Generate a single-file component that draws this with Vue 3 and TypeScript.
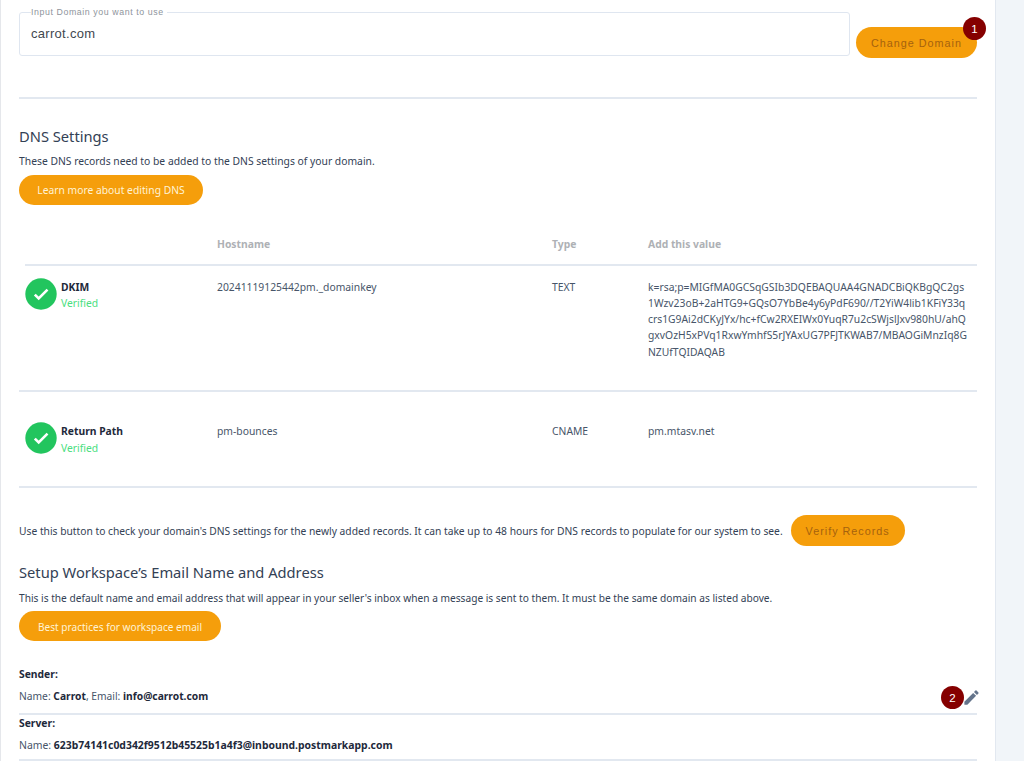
<script setup lang="ts">
interface DnsRow {
  name: string
  host: string
  type: string
  value: string[]
}

const rows: DnsRow[] = [
  {
    name: 'DKIM',
    host: '20241119125442pm._domainkey',
    type: 'TEXT',
    value: [
      'k=rsa;p=MIGfMA0GCSqGSIb3DQEBAQUAA4GNADCBiQKBgQC2gs',
      '1Wzv23oB+2aHTG9+GQsO7YbBe4y6yPdF690//T2YiW4lib1KFiY33q',
      'crs1G9Ai2dCKyJYx/hc+fCw2RXEIWx0YuqR7u2cSWjslJxv980hU/ahQ',
      'gxvOzH5xPVq1RxwYmhfS5rJYAxUG7PFJTKWAB7/MBAOGiMnzIq8G',
      'NZUfTQIDAQAB',
    ],
  },
  {
    name: 'Return Path',
    host: 'pm-bounces',
    type: 'CNAME',
    value: ['pm.mtasv.net'],
  },
]
</script>

<template>
  <div class="page">
    <main class="card">
      <section class="domain">
        <fieldset class="field">
          <legend>Input Domain you want to use</legend>
          <span class="field-value">carrot.com</span>
        </fieldset>
        <button class="btn btn-muted change">
          Change Domain
          <span class="badge badge-one">1</span>
        </button>
      </section>

      <hr class="rule first-rule" />

      <h2 class="dns-title">DNS Settings</h2>
      <p class="copy dns-copy">These DNS records need to be added to the DNS settings of your domain.</p>
      <button class="btn btn-light learn">Learn more about editing DNS</button>

      <div class="table">
        <div class="row head">
          <div></div>
          <div>Hostname</div>
          <div>Type</div>
          <div>Add this value</div>
        </div>
        <div v-for="row in rows" :key="row.name" class="row body" :class="row.type.toLowerCase()">
          <div class="status">
            <span class="check">
              <svg viewBox="0 0 32 32" width="32" height="32" aria-hidden="true">
                <circle cx="16" cy="16" r="15.7" fill="#22c55e" />
                <path d="M9.8 16.6l3.9 3.9 8.8-8.8" fill="none" stroke="#fff" stroke-width="2.6" />
              </svg>
            </span>
            <div class="status-text">
              <strong>{{ row.name }}</strong>
              <span>Verified</span>
            </div>
          </div>
          <div>{{ row.host }}</div>
          <div>{{ row.type }}</div>
          <div class="value">
            <div v-for="line in row.value" :key="line">{{ line }}</div>
          </div>
        </div>
      </div>

      <div class="verify">
        <p class="copy">Use this button to check your domain's DNS settings for the newly added records. It can take up to 48 hours for DNS records to populate for our system to see.</p>
        <button class="btn btn-muted verify-btn">Verify Records</button>
      </div>

      <h2 class="setup-title">Setup Workspace’s Email Name and Address</h2>
      <p class="copy setup-copy">This is the default name and email address that will appear in your seller's inbox when a message is sent to them. It must be the same domain as listed above.</p>
      <button class="btn btn-light best">Best practices for workspace email</button>

      <div class="info sender">
        <div class="info-label">Sender:</div>
        <div class="info-line">Name: <b>Carrot</b>, Email: <b>info@carrot.com</b></div>
        <span class="badge badge-two">2</span>
        <svg class="pencil" viewBox="0 0 24 24" width="19" height="19" aria-hidden="true">
          <path fill="#64748b" d="M3 17.25V21h3.75L17.81 9.94l-3.75-3.75L3 17.25zM20.71 7.04a1 1 0 0 0 0-1.41l-2.34-2.34a1 1 0 0 0-1.41 0l-1.83 1.83 3.75 3.75 1.83-1.83z" />
        </svg>
      </div>
      <div class="info server">
        <div class="info-label">Server:</div>
        <div class="info-line">Name: <b>623b74141c0d342f9512b45525b1a4f3@inbound.postmarkapp.com</b></div>
      </div>
    </main>
  </div>
</template>

<style>
html,
body {
  margin: 0;
  background: #f1f5f9;
  overflow: hidden;
}
</style>

<style scoped>
.page {
  height: 761px;
  overflow: hidden;
  font-family: "Noto Sans", "Open Sans", sans-serif;
  color: #1e293b;
}
.card {
  box-sizing: border-box;
  width: 996px;
  height: 761px;
  padding: 0 18px;
  background: #fff;
  border-left: 1px solid #e5e7eb;
  border-right: 1px solid #e2e8f0;
}
.domain {
  display: flex;
  align-items: flex-start;
  gap: 6px;
  padding-top: 7px;
}
.field {
  box-sizing: border-box;
  width: 831px;
  height: 49px;
  margin: 0;
  padding: 0 11px;
  border: 1px solid #dfe6f0;
  border-radius: 3px;
  font-family: "Liberation Sans", Arial, sans-serif;
  min-width: 0;
}
.field legend {
  padding: 0 3px 0 0;
  margin-left: 0;
  font-size: 8.8px;
  line-height: 11px;
  letter-spacing: 0.58px;
  color: #8e949c;
}
.field-value {
  display: block;
  margin-top: 7px;
  font-size: 13px;
  line-height: 18px;
  letter-spacing: 0.3px;
  color: #41474f;
}
.btn {
  display: block;
  box-sizing: border-box;
  margin: 0;
  padding: 0;
  border: 0;
  border-radius: 16px;
  background: #f59e0b;
  white-space: nowrap;
  cursor: pointer;
}
.btn-light {
  height: 30px;
  color: #fff3d6;
  font-family: "Noto Sans", "Open Sans", sans-serif;
  font-size: 10.3px;
}
.btn-muted {
  height: 31px;
  color: #a5620e;
  font-family: "Liberation Sans", Arial, sans-serif;
  font-size: 10.8px;
  letter-spacing: 1px;
}
.change {
  position: relative;
  width: 121px;
  margin-top: 20px;
}
.badge {
  position: absolute;
  display: flex;
  align-items: center;
  justify-content: center;
  width: 23px;
  height: 23px;
  border-radius: 50%;
  background: #850000;
  color: #fff;
  font-family: "Liberation Sans", Arial, sans-serif;
  font-size: 11.5px;
  letter-spacing: 0;
}
.badge-one {
  top: -10px;
  right: -9px;
}
.rule {
  height: 2px;
  margin: 0;
  border: 0;
  background: #e2e8f0;
}
.first-rule {
  margin-top: 39px;
}
h2 {
  margin: 0;
  font-weight: 400;
  color: #334155;
  font-size: 14.7px;
  line-height: 20px;
}
.copy {
  margin: 0;
  font-size: 10.27px;
  line-height: 16px;
  color: #334155;
}
.dns-title {
  margin-top: 27px;
}
.dns-copy {
  margin-top: 7px;
  font-size: 10.33px;
}
.learn {
  width: 184px;
  margin-top: 6px;
}
.table {
  margin-top: 31px;
  font-size: 10.33px;
  line-height: 16.25px;
  color: #475569;
}
.row {
  display: grid;
  grid-template-columns: 192px 335px 96px 1fr;
  box-sizing: border-box;
  padding-left: 6px;
  border-bottom: 2px solid #e2e8f0;
}
.head {
  height: 30px;
  margin-left: 6px;
  padding-left: 0;
  font-weight: 700;
  color: #aeb1b5;
}
.text {
  height: 126px;
  padding-top: 12.5px;
}
.cname {
  height: 96px;
  padding-top: 31px;
}
.status {
  display: flex;
  align-items: flex-start;
  gap: 4px;
}
.check {
  display: block;
  width: 32px;
  height: 32px;
  margin-top: -1px;
}
.check svg {
  display: block;
}
.status-text {
  display: flex;
  flex-direction: column;
  gap: 0.5px;
}
.status-text strong {
  color: #1e293b;
  font-weight: 700;
}
.status-text span {
  color: #4ade80;
}
.value {
  white-space: nowrap;
}
.verify {
  display: flex;
  align-items: center;
  gap: 8px;
  margin-top: 27px;
}
.verify-btn {
  width: 114px;
}
.setup-title {
  margin-top: 16px;
}
.setup-copy {
  margin-top: 8px;
  font-size: 10.16px;
}
.best {
  width: 202px;
  margin-top: 5px;
  padding-top: 1px;
  font-size: 10.1px;
}
.info {
  position: relative;
  box-sizing: border-box;
  border-bottom: 2px solid #e2e8f0;
  font-size: 10.33px;
  line-height: 16px;
  color: #475569;
}
.sender {
  height: 74px;
  padding-top: 25px;
}
.server {
  height: 46px;
  padding-top: 0;
}
.sender .info-line {
  font-size: 10.25px;
}
.server .info-line {
  font-size: 10.41px;
}
.info-label {
  font-weight: 700;
  color: #1e293b;
}
.info-line {
  margin-top: 6px;
}
.info-line b {
  font-weight: 700;
  color: #1e293b;
}
.badge-two {
  right: 13px;
  bottom: 4px;
}
.pencil {
  position: absolute;
  right: -4px;
  bottom: 6px;
}
</style>
